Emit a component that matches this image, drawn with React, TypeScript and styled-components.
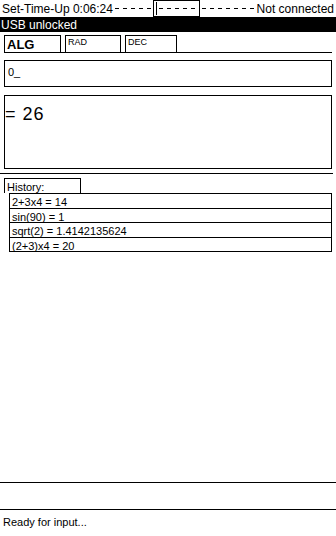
import { FC } from "react";
import styled, { createGlobalStyle } from "styled-components";

const GlobalStyle = createGlobalStyle`
  html, body {
    margin: 0;
    padding: 0;
    background: #fff;
  }
  body {
    font-family: "Liberation Sans", Arial, sans-serif;
    color: #000;
  }
`;

const Screen = styled.div`
  width: 336px;
  height: 536px;
  display: flex;
  flex-direction: column;
  overflow: hidden;
  background: #fff;
`;

const Header = styled.div`
  height: 17px;
  display: flex;
  align-items: center;
  font-size: 12px;
  white-space: nowrap;
  padding: 0 2px 0 2px;
`;

const Dashes = styled.span<{ $width?: number }>`
  flex: ${({ $width }) => ($width ? "none" : 1)};
  width: ${({ $width }) => ($width ? `${$width}px` : "auto")};
  height: 1px;
  margin: 0 2px;
  background: repeating-linear-gradient(
    to right,
    #000 0,
    #000 4px,
    transparent 4px,
    transparent 8px
  );
`;

const SlotBox = styled.div`
  width: 47px;
  height: 17px;
  box-sizing: border-box;
  border: 1px solid #000;
  display: flex;
  align-items: center;
  padding-left: 2px;
  overflow: hidden;
`;

const Cursor = styled.span`
  width: 1px;
  height: 13px;
  background: #000;
`;

const BlackBar = styled.div`
  height: 15px;
  background: #000;
  color: #fff;
  font-size: 12px;
  line-height: 16px;
  padding-left: 1px;
`;

const TabRow = styled.div`
  margin: 3px 4px 0;
  display: flex;
  gap: 4px;
  border-bottom: 1px solid #000;
`;

const Tab = styled.div<{ $active?: boolean; $width: number }>`
  width: ${({ $width }) => $width}px;
  height: 17px;
  box-sizing: border-box;
  border: 1px solid #000;
  border-bottom: none;
  padding-left: 2px;
  font-size: ${({ $active }) => ($active ? "13px" : "9px")};
  font-weight: ${({ $active }) => ($active ? 700 : 400)};
  line-height: ${({ $active }) => ($active ? "17px" : "12px")};
`;

const InputBox = styled.div`
  margin: 7px 4px 0;
  height: 27px;
  box-sizing: border-box;
  border: 1px solid #000;
  font-size: 11px;
  padding: 5px 3px 0;
`;

const ResultBox = styled.div`
  margin: 8px 4px 0;
  height: 74px;
  box-sizing: border-box;
  border: 1px solid #000;
  font-size: 18px;
  letter-spacing: 1px;
  line-height: 18px;
  padding: 9px 0 0 0;
`;

const Divider = styled.div`
  margin-top: 4px;
  width: 333px;
  border-top: 1px solid #000;
`;

const HistoryLabel = styled.div`
  margin: 4px 0 0 4px;
  width: 77px;
  height: 15px;
  box-sizing: border-box;
  border: 1px solid #000;
  border-bottom: none;
  font-size: 11px;
  line-height: 17px;
  padding-left: 2px;
`;

const HistoryList = styled.div`
  margin: 0 4px 0 9px;
  border: 1px solid #000;
  border-bottom: none;
`;

const HistoryRow = styled.div`
  height: 14.5px;
  box-sizing: border-box;
  border-bottom: 1px solid #000;
  font-size: 11px;
  line-height: 17px;
  padding-left: 2px;
  overflow: hidden;
  white-space: nowrap;
`;

const Spacer = styled.div`
  flex: 1;
`;

const Footer = styled.div`
  border-top: 1px solid #000;
  height: 26px;
`;

const StatusBar = styled.div`
  border-top: 1px solid #000;
  height: 27px;
  box-sizing: border-box;
  font-size: 11px;
  line-height: 24px;
  padding-left: 3px;
`;

const history = [
  "2+3x4 = 14",
  "sin(90) = 1",
  "sqrt(2) = 1.4142135624",
  "(2+3)x4 = 20",
];

const App: FC = () => {
  return (
    <Screen>
      <GlobalStyle />
      <Header>
        <span>Set-Time-Up 0:06:24</span>
        <Dashes $width={36} />
        <SlotBox>
          <Cursor />
          <Dashes />
        </SlotBox>
        <Dashes />
        <span>Not connected</span>
      </Header>
      <BlackBar>USB unlocked</BlackBar>
      <TabRow>
        <Tab $active $width={57}>ALG</Tab>
        <Tab $width={56}>RAD</Tab>
        <Tab $width={52}>DEC</Tab>
      </TabRow>
      <InputBox>0_</InputBox>
      <ResultBox>= 26</ResultBox>
      <Divider />
      <HistoryLabel>History:</HistoryLabel>
      <HistoryList>
        {history.map((h) => (
          <HistoryRow key={h}>{h}</HistoryRow>
        ))}
      </HistoryList>
      <Spacer />
      <Footer />
      <StatusBar>Ready for input...</StatusBar>
    </Screen>
  );
};

export default App;
